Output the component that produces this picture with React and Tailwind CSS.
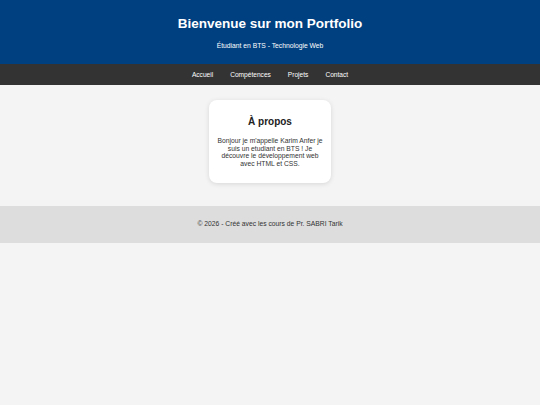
export default function App() {
  return (
    <div className="min-h-[405px] bg-[#f4f4f4] font-['Liberation_Sans',Arial,sans-serif] text-[#333]">
      {/* Header */}
      <header className="h-[64px] bg-[#004080] text-white text-center pt-[16px]">
        <h1 className="text-[13.5px] leading-[16px] font-bold">Bienvenue sur mon Portfolio</h1>
        <p className="text-[6.75px] leading-[8px] mt-[10px]">Étudiant en BTS - Technologie Web</p>
      </header>

      {/* Nav */}
      <nav className="h-[21px] bg-[#333] flex items-center justify-center gap-[17px] text-white text-[6.6px]">
        <a>Accueil</a>
        <a>Compétences</a>
        <a>Projets</a>
        <a>Contact</a>
      </nav>

      {/* Main */}
      <main className="flex justify-center pt-[15px] pb-[23px]">
        <section className="w-[122px] h-[83px] bg-white rounded-[8px] shadow-[0_1px_5px_rgba(0,0,0,0.12)] text-center px-[7px] pt-[16px]">
          <h2 className="text-[10px] font-bold text-[#222] leading-[12px]">À propos</h2>
          <p className="text-[6.75px] leading-[7.6px] mt-[9px]">
            Bonjour je m'appelle Karim Anfer je suis un etudiant en BTS ! Je découvre le développement web avec HTML et CSS.
          </p>
        </section>
      </main>

      {/* Footer */}
      <footer className="h-[37px] bg-[#ddd] flex items-center justify-center text-[6.75px]">
        © 2026 - Créé avec les cours de Pr. SABRI Tarik
      </footer>
    </div>
  )
}
